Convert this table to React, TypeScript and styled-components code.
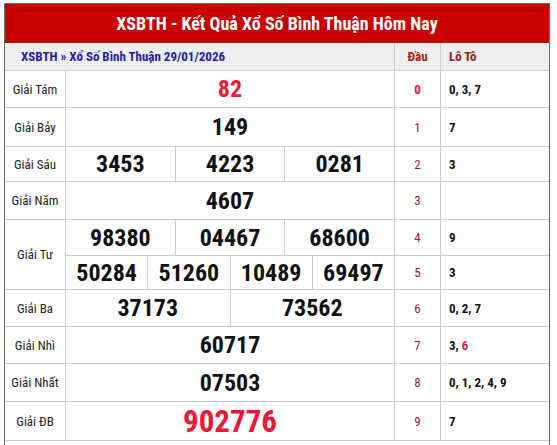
import React from "react";
import styled, { createGlobalStyle } from "styled-components";

const Global = createGlobalStyle`
  html, body { margin: 0; padding: 0; background: #fff; }
  body { font-family: Roboto, "Liberation Sans", sans-serif; font-stretch: 75%; }
`;

const Box = styled.div`
  margin: 3px 0 0 4px;
  width: 546px;
  min-height: 460px;
  box-sizing: border-box;
  border: 1px solid #6b6b6b;
  background: #fff;
`;

const Title = styled.h1`
  margin: 0;
  height: 39px;
  background: #c80000;
  color: #fff;
  font-size: 18px;
  font-weight: 700;
  display: flex;
  align-items: center;
  justify-content: center;
  font-stretch: 75%;
`;

const Grid = styled.div`
  display: grid;
  grid-template-columns: 61px 329px 46px 1fr;
  grid-template-rows: 28px 37px 39px 35px 38px 36px 34px 37px 37px 38px 39px;
`;

const Cell = styled.div<{ $span?: number; $head?: boolean; $last?: boolean }>`
  box-sizing: border-box;
  border-bottom: 1px solid #cbcbcb;
  border-right: ${(p) => (p.$last ? "none" : "1px solid #cbcbcb")};
  background: ${(p) => (p.$head ? "#eeeeee" : "#fff")};
  grid-row: ${(p) => (p.$span ? `span ${p.$span}` : "auto")};
  display: flex;
  align-items: center;
  min-width: 0;
`;

const Crumb = styled(Cell)`
  grid-column: span 2;
  padding-left: 16px;
  color: #2121a8;
  font-size: 13px;
  font-weight: 700;
`;

const HeadCell = styled(Cell)<{ $center?: boolean }>`
  justify-content: ${(p) => (p.$center ? "center" : "flex-start")};
  padding-left: ${(p) => (p.$center ? "0" : "8px")};
  color: #9b1b1b;
  font-size: 13px;
  font-weight: 700;
`;

const Label = styled(Cell)`
  justify-content: center;
  color: #222;
  font-size: 13px;
`;

const Numbers = styled(Cell)`
  padding: 0;
  align-items: stretch;
`;

const Num = styled.div<{ $red?: boolean; $big?: boolean }>`
  flex: 1;
  display: flex;
  align-items: center;
  justify-content: center;
  font-weight: 700;
  font-size: ${(p) => (p.$big ? "31px" : "24px")};
  color: ${(p) => (p.$red ? "#ee1537" : "#111")};
  border-left: 1px solid #cbcbcb;
  &:first-child { border-left: none; }
`;

const Dau = styled(Cell)<{ $hot?: boolean }>`
  justify-content: center;
  font-size: 13px;
  color: ${(p) => (p.$hot ? "#ee1537" : "#a3192e")};
  font-weight: ${(p) => (p.$hot ? 700 : 400)};
`;

const Loto = styled(Cell)`
  padding-left: 8px;
  font-size: 13px;
  font-weight: 700;
  color: #111;
  white-space: pre;
`;

const Hot = styled.span`
  color: #ee1537;
`;

type Line = { nums: string[]; red?: boolean; big?: boolean };
type Prize = { label: string; lines: Line[] };

const prizes: Prize[] = [
  { label: "Giải Tám", lines: [{ nums: ["82"], red: true }] },
  { label: "Giải Bảy", lines: [{ nums: ["149"] }] },
  { label: "Giải Sáu", lines: [{ nums: ["3453", "4223", "0281"] }] },
  { label: "Giải Năm", lines: [{ nums: ["4607"] }] },
  {
    label: "Giải Tư",
    lines: [
      { nums: ["98380", "04467", "68600"] },
      { nums: ["50284", "51260", "10489", "69497"] },
    ],
  },
  { label: "Giải Ba", lines: [{ nums: ["37173", "73562"] }] },
  { label: "Giải Nhì", lines: [{ nums: ["60717"] }] },
  { label: "Giải Nhất", lines: [{ nums: ["07503"] }] },
  { label: "Giải ĐB", lines: [{ nums: ["902776"], red: true, big: true }] },
];

const loto: React.ReactNode[] = [
  "0, 3, 7",
  "7",
  "3",
  "",
  "9",
  "3",
  "0, 2, 7",
  <span>{"3, "}<Hot>6</Hot></span>,
  "0, 1, 2, 4, 9",
  "7",
];

export default function App() {
  let idx = 0;
  const rows: React.ReactNode[] = [];
  prizes.forEach((p) => {
    p.lines.forEach((line, li) => {
      const d = idx++;
      rows.push(
        <React.Fragment key={`${p.label}-${li}`}>
          {li === 0 && <Label $span={p.lines.length}>{p.label}</Label>}
          <Numbers>
            {line.nums.map((n) => (
              <Num key={n} $red={line.red} $big={line.big}>
                {n}
              </Num>
            ))}
          </Numbers>
          <Dau $hot={d === 0}>{d}</Dau>
          <Loto $last>{loto[d]}</Loto>
        </React.Fragment>
      );
    });
  });

  return (
    <>
      <Global />
      <Box>
        <Title>XSBTH - Kết Quả Xổ Số Bình Thuận Hôm Nay</Title>
        <Grid>
          <Crumb $head>XSBTH » Xổ Số Bình Thuận 29/01/2026</Crumb>
          <HeadCell $head $center>Đầu</HeadCell>
          <HeadCell $head $last>Lô Tô</HeadCell>
          {rows}
        </Grid>
      </Box>
    </>
  );
}
